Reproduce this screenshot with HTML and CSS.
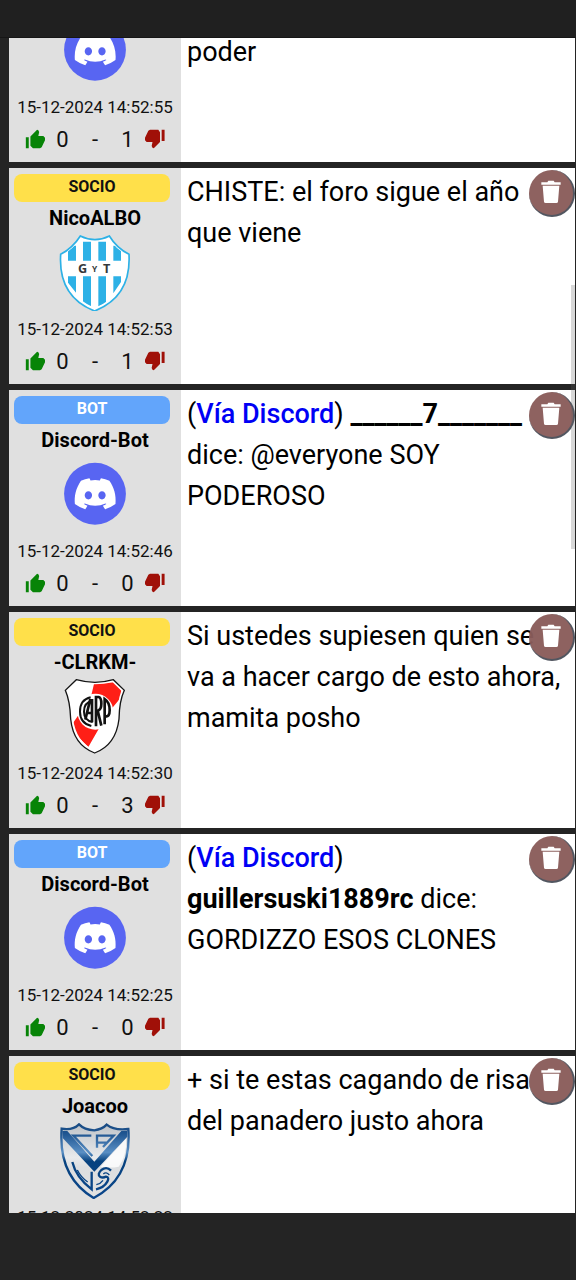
FILE: index.html
```html
<!DOCTYPE html>
<html lang="es">
<head>
<meta charset="utf-8">
<meta name="viewport" content="width=device-width, initial-scale=1">
<title>Foro</title>
<link rel="stylesheet" href="styles.css">
</head>
<body>
<svg class="sprite" aria-hidden="true">
  <symbol id="up" viewBox="0 0 24 24"><path d="M1 23h3.500V10H1zM24 10.500L22 8.500H16l1-5-1-2L14.500 1 6.500 9v11l3 3H18l2-1 4-8.500z"/></symbol>
  <symbol id="down" viewBox="0 0 24 24"><path d="M23.500 1H20v13.500h3.500zM0 13.500L2 15.500H9l-1 5 1 2 1.500.5L18 15.500V4l-2-3H6L4 2 0 10.500z"/></symbol>
  <symbol id="trash" viewBox="0 0 60 70"><path d="M1 6h18l3-5h16l3 5h18v7H1zM5 16h50l-4 48q-.5 4-5 4H14q-4.500 0-5-4z"/></symbol>
  <symbol id="discord" viewBox="-57 -66 236 236">
    <circle cx="61" cy="48" r="96" fill="#5865f2"/>
    <path transform="translate(-2 0)" fill="#fff" d="M107.700,8.070A105.150,105.150,0,0,0,81.470,0a72.060,72.060,0,0,0-3.360,6.830A97.680,97.680,0,0,0,49,6.830,72.370,72.370,0,0,0,45.640,0,105.890,105.890,0,0,0,19.390,8.090C2.790,32.650-1.710,56.600.54,80.210h0A105.730,105.730,0,0,0,32.710,96.360,77.700,77.700,0,0,0,39.600,85.250a68.420,68.420,0,0,1-10.850-5.180c.91-.66,1.800-1.340,2.660-2a75.570,75.570,0,0,0,64.320,0c.87.71,1.760,1.390,2.660,2a68.680,68.680,0,0,1-10.870,5.190,77,77,0,0,0,6.890,11.100A105.250,105.250,0,0,0,126.600,80.220h0C129.240,52.840,122.090,29.110,107.700,8.070ZM42.450,65.690C36.180,65.690,31,60,31,53s5-12.740,11.430-12.740S54,46,53.890,53,48.840,65.690,42.450,65.690Zm42.240,0C78.410,65.690,73.250,60,73.250,53s5-12.740,11.440-12.740S96.230,46,96.120,53,91.080,65.690,84.690,65.690Z"/>
  </symbol>
</svg>
<header class="topbar"></header>
<main class="feed">
  <div class="posts">
    <article class="post">
      <aside class="author">
        <svg class="avatar"><use href="#discord"/></svg>
        <time class="date">15-12-2024 14:52:55</time>
        <div class="votes">
          <button class="vote vote-up" aria-label="Me gusta"><svg><use href="#up"/></svg></button><span>0</span><span>-</span><span>1</span><button class="vote vote-down" aria-label="No me gusta"><svg><use href="#down"/></svg></button>
        </div>
      </aside>
      <p class="message message-tail">poder</p>
    </article>

    <article class="post">
      <aside class="author">
        <span class="badge badge-socio">SOCIO</span>
        <strong class="name">NicoALBO</strong>
        <svg class="avatar" viewBox="171 223 228 228">
          <clipPath id="gyt"><path d="M242 233Q285 249 326 233Q347 265 380 282V300Q384 400 284 442Q184 400 189 282Q220 265 242 233z"/></clipPath>
          <path d="M241 226Q285 248 328 226Q350 262 387 281Q394 408 284 451Q174 408 182 281Q218 262 241 226z" fill="#fff" stroke="#2db1e6" stroke-width="5"/>
          <g clip-path="url(#gyt)" fill="#2db1e6"><path d="M204 255h24v45h-24zM249 243h24v57h-24zM295 243h23v57h-23zM340 255h23v45h-23zM204 347h24v49l-24-30zM249 347h24v91l-24-12zM295 347h23v80l-23 11zM340 347h23v17l-23 34z"/></g>
          <g fill="#35383a" font-weight="700" font-family="Open Sans, sans-serif" text-anchor="middle"><text x="248" y="338" font-size="38">G</text><text x="284" y="333" font-size="25">Y</text><text x="320" y="338" font-size="38">T</text></g>
        </svg>
        <time class="date">15-12-2024 14:52:53</time>
        <div class="votes">
          <button class="vote vote-up" aria-label="Me gusta"><svg><use href="#up"/></svg></button><span>0</span><span>-</span><span>1</span><button class="vote vote-down" aria-label="No me gusta"><svg><use href="#down"/></svg></button>
        </div>
      </aside>
      <p class="message">CHISTE: el foro sigue el año que viene</p>
      <button class="delete" aria-label="Eliminar"><svg><use href="#trash"/></svg></button>
    </article>

    <article class="post">
      <aside class="author">
        <span class="badge badge-bot">BOT</span>
        <strong class="name">Discord-Bot</strong>
        <svg class="avatar"><use href="#discord"/></svg>
        <time class="date">15-12-2024 14:52:46</time>
        <div class="votes">
          <button class="vote vote-up" aria-label="Me gusta"><svg><use href="#up"/></svg></button><span>0</span><span>-</span><span>0</span><button class="vote vote-down" aria-label="No me gusta"><svg><use href="#down"/></svg></button>
        </div>
      </aside>
      <p class="message">(<a href="#">Vía Discord</a>) <b>______7_______</b> dice: @everyone SOY PODEROSO</p>
      <button class="delete" aria-label="Eliminar"><svg><use href="#trash"/></svg></button>
    </article>

    <article class="post">
      <aside class="author">
        <span class="badge badge-socio">SOCIO</span>
        <strong class="name">-CLRKM-</strong>
        <svg class="avatar" viewBox="171 222 228 228">
          <clipPath id="river"><path d="M232 232Q285 244 338 232L364 257Q352 290 350 340Q340 412 284 436Q228 412 219 340Q217 290 205 257z"/></clipPath>
          <path d="M229 224Q285 240 340 224L373 256Q358 288 357 342Q348 420 284 444Q220 420 212 342Q210 288 196 256z" fill="#fff" stroke="#151515" stroke-width="4"/>
          <path clip-path="url(#river)" d="M286 220H380V257L336 310 296 372L265 426L208 370L232 335L275 266z" fill="#ff1f17"/>
          <circle cx="286" cy="320" r="54" fill="#fff"/>
          <g fill="none" stroke="#111" stroke-width="8">
            <path d="M272 277Q240 284 240 320Q240 354 274 363M277 289Q252 292 252 320Q252 346 278 351" stroke-width="6"/>
            <path d="M256 344L270 286H276V352M262 324H276"/>
            <path d="M288 364V276H296Q304 278 304 296T293 317L304 362"/>
            <path d="M314 358V282Q329 292 329 315T315 333"/>
          </g>
        </svg>
        <time class="date">15-12-2024 14:52:30</time>
        <div class="votes">
          <button class="vote vote-up" aria-label="Me gusta"><svg><use href="#up"/></svg></button><span>0</span><span>-</span><span>3</span><button class="vote vote-down" aria-label="No me gusta"><svg><use href="#down"/></svg></button>
        </div>
      </aside>
      <p class="message">Si ustedes supiesen quien se va a hacer cargo de esto ahora, mamita posho</p>
      <button class="delete" aria-label="Eliminar"><svg><use href="#trash"/></svg></button>
    </article>

    <article class="post">
      <aside class="author">
        <span class="badge badge-bot">BOT</span>
        <strong class="name">Discord-Bot</strong>
        <svg class="avatar"><use href="#discord"/></svg>
        <time class="date">15-12-2024 14:52:25</time>
        <div class="votes">
          <button class="vote vote-up" aria-label="Me gusta"><svg><use href="#up"/></svg></button><span>0</span><span>-</span><span>0</span><button class="vote vote-down" aria-label="No me gusta"><svg><use href="#down"/></svg></button>
        </div>
      </aside>
      <p class="message">(<a href="#">Vía Discord</a>) <b>guillersuski1889rc</b> dice: GORDIZZO ESOS CLONES</p>
      <button class="delete" aria-label="Eliminar"><svg><use href="#trash"/></svg></button>
    </article>

    <article class="post">
      <aside class="author">
        <span class="badge badge-socio">SOCIO</span>
        <strong class="name">Joacoo</strong>
        <svg class="avatar" viewBox="171 231 228 228">
          <defs>
            <linearGradient id="blue" gradientUnits="userSpaceOnUse" x1="0" y1="235" x2="0" y2="456"><stop offset="0" stop-color="#194b83"/><stop offset=".12" stop-color="#1e5490"/><stop offset=".38" stop-color="#5a8fc4"/><stop offset=".5" stop-color="#07427f"/><stop offset="1" stop-color="#0b468b"/></linearGradient>
            <linearGradient id="steel" gradientUnits="userSpaceOnUse" x1="0" y1="235" x2="0" y2="456"><stop offset="0" stop-color="#bfc3c8"/><stop offset=".45" stop-color="#e8eaec"/><stop offset=".58" stop-color="#dcdee0"/><stop offset="1" stop-color="#e2e2e2"/></linearGradient>
          </defs>
          <path d="M185 248Q218 254 237 235Q253 251 283 253Q307 250 320 236Q342 254 385 249Q396 396 281 456Q174 392 185 248z" fill="url(#steel)" stroke="url(#blue)" stroke-width="7"/>
          <path d="M379 278Q380 330 356 362Q330 367 302 362L377 278z" fill="#fff" fill-opacity=".8"/>
          <path d="M187 255H202L283 347L364 255H382V272L283 377L188 276z" fill="url(#blue)"/>
          <g fill="none" stroke="url(#blue)" stroke-width="7">
            <path d="M274 269H220L277 330"/>
            <path d="M291 305V269H341L309 303M291 290H320"/>
            <path d="M217 348Q228 394 275 430V377"/>
            <path d="M333 374Q320 360 304 372Q291 384 300 392Q308 397 318 392Q329 394 322 407Q312 425 288 430"/>
          </g>
          <path d="M232 372Q242 393 263 408M328 387Q318 376 310 384M309 403Q302 413 289 416" fill="none" stroke="url(#blue)" stroke-width="4"/>
        </svg>
        <time class="date">15-12-2024 14:52:22</time>
      </aside>
      <p class="message">+ si te estas cagando de risa del panadero justo ahora</p>
      <button class="delete" aria-label="Eliminar"><svg><use href="#trash"/></svg></button>
    </article>
  </div>
  <div class="scroll-thumb"></div>
</main>
</body>
</html>
```
FILE: styles.css
```css
* { box-sizing: border-box; }
body {
  margin: 0;
  height: 100vh;
  display: flex;
  flex-direction: column;
  padding-bottom: 67px;
  overflow: hidden;
  background: #242424;
  color: #000;
  font-family: Roboto, "Liberation Sans", sans-serif;
}
button { padding: 0; border: 0; background: none; cursor: pointer; }
.sprite { position: absolute; width: 0; height: 0; }
.topbar { height: 38px; flex: none; background: #202020; border-bottom: 1px solid #161616; }
.feed {
  position: relative;
  flex: 1;
  min-height: 0;
  overflow: hidden;
  padding: 0 1px 0 9px;
}
.posts { display: flex; flex-direction: column; gap: 6px; margin-top: -92px; }
.post {
  position: relative;
  display: flex;
  min-height: 216px;
  background: #fff;
}
.author {
  flex: none;
  width: 172px;
  min-height: 216px;
  padding: 6px 0 9px;
  display: flex;
  flex-direction: column;
  align-items: center;
  background: #e0e0e0;
}
.author > :first-child:not(.badge) { margin-top: auto; }
.badge {
  align-self: stretch;
  margin: 0 11px 0 5px;
  border-radius: 8px;
  text-align: center;
  font-size: 16px;
  font-weight: 700;
  line-height: 26px;
  height: 28px;
}
.badge-socio { background: #ffe04a; color: #111; }
.badge-bot { background: #62a5fb; color: #fff; }
.name { font-size: 20px; font-weight: 700; line-height: 33px; }
.avatar { display: block; flex: none; width: 76px; height: 76px; }
.date { font-size: 17px; line-height: 36px; color: #111; }
.votes {
  display: grid;
  grid-template-columns: 20px 35px 30px 35px 20px;
  align-items: center;
  justify-items: center;
  height: 28px;
  font-size: 22px;
  color: #111;
}
.vote svg { display: block; width: 20px; height: 20px; }
.vote-up { color: #078407; }
.vote-down { color: #a01008; }
.vote svg, .delete svg { fill: currentColor; }
.message {
  flex: 1;
  min-width: 0;
  margin: 0;
  padding: 4px 11px 4px 6px;
  font-size: 27px;
  line-height: 41px;
}
.message-tail { padding-top: 86px; }
.message a { color: #0000f5; font-weight: 500; text-decoration: none; }
.message b { font-weight: 700; }
.delete {
  position: absolute;
  top: 2px;
  right: 0;
  width: 46px;
  height: 47px;
  padding-bottom: 2px;
  border: solid #4b505a;
  border-width: 0 2px 2px 0;
  border-radius: 50%;
  background: #8a5c5a;
  color: #fff;
  opacity: .96;
  display: grid;
  place-items: center;
}
.delete svg { width: 20px; height: 24px; }
.scroll-thumb {
  position: absolute;
  right: 1px;
  top: 21%;
  width: 4px;
  height: 23%;
  max-height: 264px;
  background: rgba(100, 100, 100, .25);
}
```
